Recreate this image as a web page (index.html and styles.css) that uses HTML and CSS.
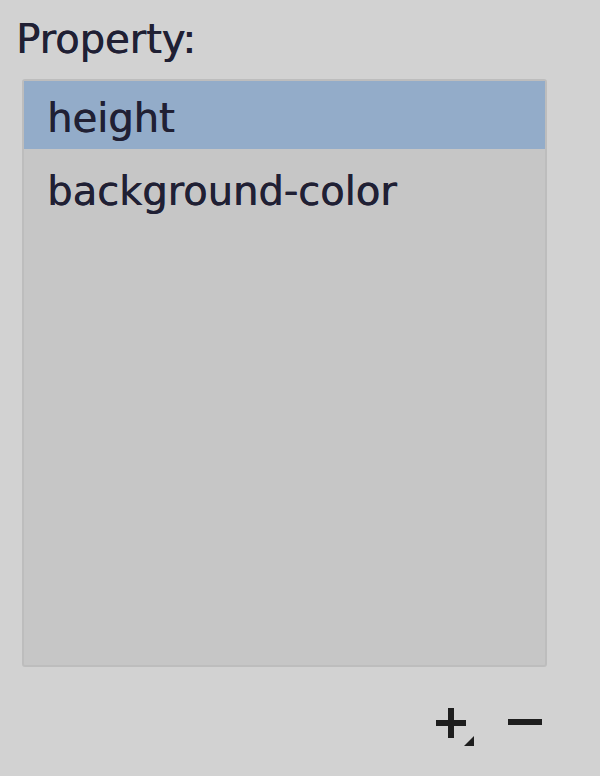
FILE: index.html
```html
<!DOCTYPE html>
<html>
<head>
<meta charset="utf-8">
<link rel="stylesheet" href="styles.css">
</head>
<body>
<div class="panel">
  <div class="label">Property:</div>
  <div class="list">
    <div class="row selected">height</div>
    <div class="row">background-color</div>
  </div>
  <div class="tools">
    <span class="btn add" title="Add">
      <svg width="44" height="40" viewBox="0 0 44 40">
        <rect x="2" y="12" width="30" height="6" fill="#1e1e1e"/>
        <rect x="14" y="0" width="6" height="30" fill="#1e1e1e"/>
        <polygon points="40,28 40,38 30,38" fill="#1e1e1e"/>
      </svg>
    </span>
    <span class="btn remove" title="Remove">
      <svg width="34" height="8" viewBox="0 0 34 8">
        <rect x="0" y="1" width="34" height="6" fill="#1e1e1e"/>
      </svg>
    </span>
  </div>
</div>
</body>
</html>
```
FILE: styles.css
```css
html, body {
  margin: 0;
  padding: 0;
  background: #d2d2d2;
  width: 600px;
  height: 776px;
  overflow: hidden;
}
.panel {
  display: flex;
  flex-direction: column;
  font-family: "DejaVu Sans", Verdana, sans-serif;
  color: #202034;
  text-shadow: 0.6px 0 0 #202034;
}
.label {
  font-size: 40px;
  line-height: 46px;
  margin: 16px 0 0 16px;
}
.list {
  margin: 17px 0 0 22px;
  width: 521px;
  height: 584px;
  background: #c6c6c6;
  border: 2px solid #bdbdbd;
  border-radius: 3px;
  display: flex;
  flex-direction: column;
}
.row {
  font-size: 40px;
  height: 84px;
  line-height: 84px;
  padding-left: 23px;
  box-sizing: border-box;
}
.row.selected {
  background: #93acc9;
  height: 68px;
  line-height: 74px;
}
.tools {
  display: flex;
  justify-content: flex-end;
  align-items: flex-start;
  gap: 30px;
  margin: 41px 58px 0 0;
}
.btn {
  display: block;
}
.btn.add svg, .btn.remove svg {
  display: block;
}
.btn.remove {
  margin-top: 10px;
}
```
